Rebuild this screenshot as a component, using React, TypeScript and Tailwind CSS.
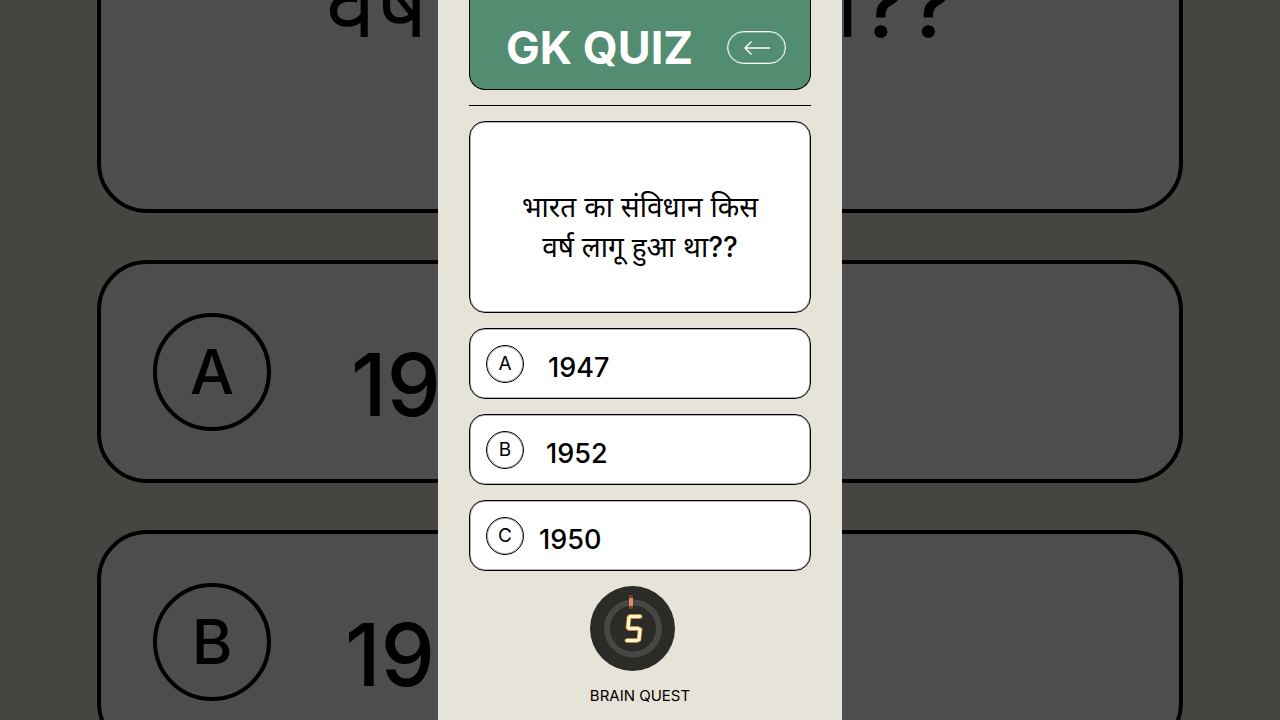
import clsx from "clsx";

interface Option {
  letter: string;
  answer: string;
  spacing: string;
  backdropSpacing: string;
}

interface CardProps {
  backdrop?: boolean;
}

const question = "भारत का संविधान किस वर्ष लागू हुआ था";

const options: Option[] = [
  { letter: "A", answer: "1947", spacing: "gap-6", backdropSpacing: "gap-20" },
  { letter: "B", answer: "1952", spacing: "gap-[22px]", backdropSpacing: "gap-[74px]" },
  { letter: "C", answer: "1950", spacing: "gap-[15px]", backdropSpacing: "gap-12" },
];

// a: top, b: top right, c: bottom right, d: bottom, e: bottom left, f: top left, g: middle
const segments = {
  a: [6, 2, 16, 2],
  b: [17, 3, 16, 13],
  c: [16, 15, 15, 25],
  d: [3, 26, 13, 26],
  e: [3, 15, 2, 25],
  f: [5, 3, 4, 13],
  g: [5, 14, 14, 14],
};

const digitSegments: Record<number, (keyof typeof segments)[]> = {
  0: ["a", "b", "c", "d", "e", "f"],
  1: ["b", "c"],
  2: ["a", "b", "g", "e", "d"],
  3: ["a", "b", "g", "c", "d"],
  4: ["f", "g", "b", "c"],
  5: ["a", "f", "g", "c", "d"],
};

function QuestionCard({ backdrop }: CardProps) {
  const Tag = backdrop ? "p" : "h2";
  return (
    <div
      className={clsx(
        "flex items-center justify-center bg-white border-black text-center",
        backdrop
          ? "h-[609px] -mt-[396px] shrink-0 rounded-[50px] border-4 pt-16 text-[90px] leading-[127px]"
          : "h-48 rounded-2xl border inset-ring inset-ring-black/30 pt-5 text-[28px] leading-10"
      )}
    >
      <Tag className={backdrop ? "w-[800px]" : "w-[250px]"}>
        {question}
        <span className="font-medium">??</span>
      </Tag>
    </div>
  );
}

function OptionCard({
  letter,
  answer,
  spacing,
  backdropSpacing,
  backdrop,
}: Option & CardProps) {
  const Tag = backdrop ? "div" : "button";
  return (
    <Tag
      className={clsx(
        "flex w-full items-center bg-white border-black text-left",
        backdrop
          ? ["h-[223px] shrink-0 rounded-[50px] border-4 pl-[52px]", backdropSpacing]
          : ["h-[71px] rounded-2xl border inset-ring inset-ring-black/30 pl-4", spacing]
      )}
    >
      <span
        className={clsx(
          "flex items-center justify-center rounded-full border-black",
          backdrop
            ? "size-[118px] border-4 text-[62px] font-medium"
            : "size-[38px] border inset-ring inset-ring-black/30 pt-0.5 text-[19px]"
        )}
      >
        {letter}
      </span>
      <span
        className={clsx(
          "font-medium",
          backdrop ? "pt-7 text-[86px]" : "pt-2.5 text-[27px]"
        )}
      >
        {answer}
      </span>
    </Tag>
  );
}

function Timer({ seconds }: { seconds: number }) {
  return (
    <div role="timer" className="size-[85px] rounded-full bg-[#2b2b28]">
      <span className="sr-only">{seconds}</span>
      <svg aria-hidden="true" viewBox="0 0 85 85" className="size-full">
        <circle
          cx="43"
          cy="42.5"
          r="26"
          fill="none"
          stroke="#474745"
          strokeWidth="6"
        />
        <rect x="39" y="9" width="4" height="14" fill="#7a4220" />
        <rect x="39" y="12" width="4" height="8" fill="#e08a68" />
        <g transform="translate(34 28.5)" strokeLinecap="round">
          {digitSegments[seconds].map((name) => {
            const [x1, y1, x2, y2] = segments[name];
            return (
              <line key={name} x1={x1} y1={y1} x2={x2} y2={y2} stroke="#a8690f" strokeWidth="5" />
            );
          })}
          {digitSegments[seconds].map((name) => {
            const [x1, y1, x2, y2] = segments[name];
            return (
              <line key={name} x1={x1} y1={y1} x2={x2} y2={y2} stroke="#fff3d2" strokeWidth="3.4" />
            );
          })}
        </g>
      </svg>
    </div>
  );
}

function Backdrop() {
  return (
    <div aria-hidden="true" className="absolute inset-0 overflow-hidden bg-black">
      <div className="flex h-full flex-col gap-[47px] bg-[#e6e4d9] px-[97px] opacity-30">
        <QuestionCard backdrop />
        {options.map((option) => (
          <OptionCard key={option.letter} {...option} backdrop />
        ))}
      </div>
    </div>
  );
}

export default function App() {
  return (
    <div className="relative flex min-h-screen justify-center overflow-hidden font-['Inter','Noto_Sans',sans-serif] text-black">
      <Backdrop />
      <main className="relative flex w-full max-w-[404px] flex-col gap-[15px] bg-[#e6e4d9] px-[31px]">
        <header className="flex h-[90px] items-center justify-between rounded-b-2xl border border-t-0 border-black bg-[#528d72] pt-1.5 pr-6 pl-9">
          <h1 className="text-[45px] font-bold text-white">GK QUIZ</h1>
          <button
            aria-label="Back"
            className="flex h-[33px] w-[59px] items-center justify-center rounded-full border border-white inset-ring inset-ring-white/30 text-white"
          >
            <svg
              viewBox="0 0 26 14"
              className="h-[14px] w-[26px]"
              fill="none"
              stroke="currentColor"
              strokeWidth="1.5"
              strokeLinecap="round"
              strokeLinejoin="round"
            >
              <path d="M25.5 7H1M7 1L1 7L7 13" />
            </svg>
          </button>
        </header>
        <hr className="border-black" />
        <QuestionCard />
        {options.map((option) => (
          <OptionCard key={option.letter} {...option} />
        ))}
        <footer className="mx-auto flex flex-col gap-[15px]">
          <Timer seconds={5} />
          <p className="text-[15px] leading-5">BRAIN QUEST</p>
        </footer>
      </main>
    </div>
  );
}
